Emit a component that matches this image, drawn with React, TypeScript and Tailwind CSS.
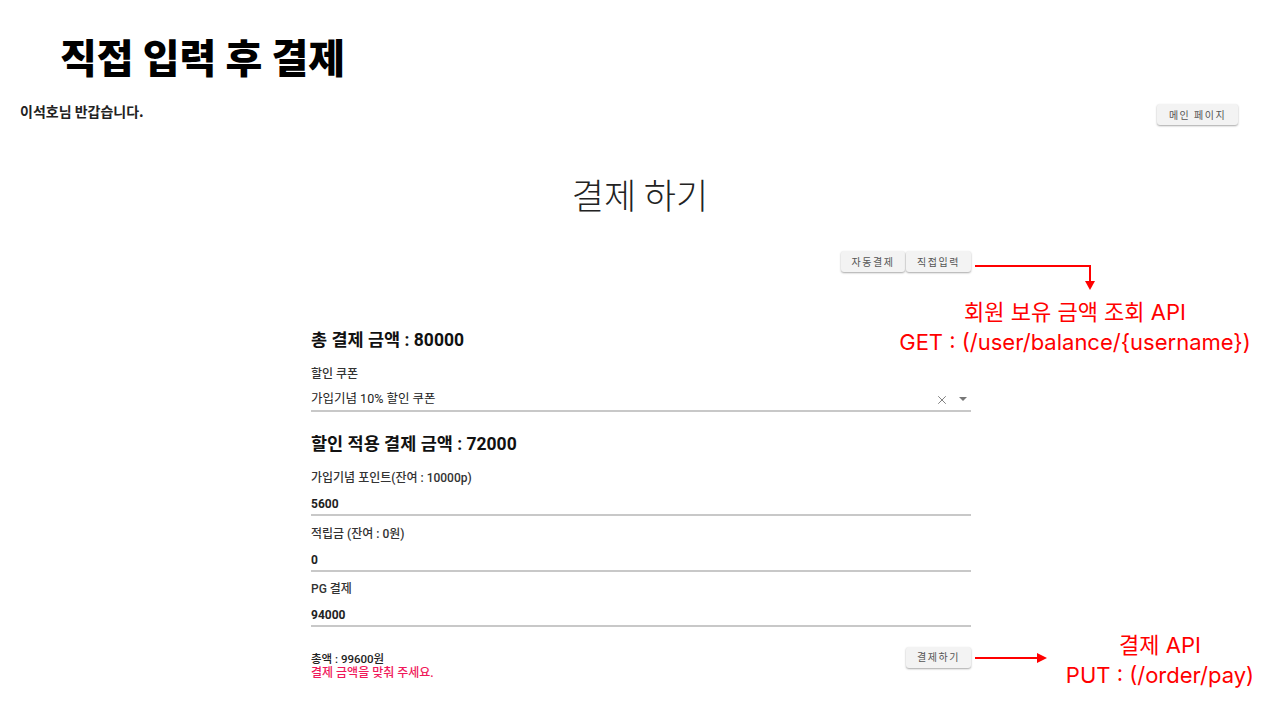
import { X } from "lucide-react";

const cjk = { fontFamily: '"Noto Sans CJK KR", "Noto Sans", sans-serif' };
const form = { fontFamily: 'Roboto, "Noto Sans CJK KR", sans-serif' };
const note = { fontFamily: 'Inter, "Noto Sans CJK KR", sans-serif' };

function MuiButton({ children, className = "" }: { children: React.ReactNode; className?: string }) {
  return (
    <button
      className={
        "bg-[#f3f3f3] text-[#555] text-[10px] tracking-[0.15em] rounded-[3px] shadow-[0_1px_2px_rgba(0,0,0,0.35)] h-[21px] " +
        className
      }
    >
      {children}
    </button>
  );
}

function Field({ label, value }: { label: string; value: string }) {
  return (
    <div className="flex flex-col mb-[7.5px]">
      <div className="text-[12px] font-medium text-[#333] h-[20px] leading-[20px]">{label}</div>
      <div className="text-[12px] font-bold text-[#222] h-[28px] pt-[6px] leading-[20px] border-b-[2px] border-[#c8c8c8]">
        {value}
      </div>
    </div>
  );
}

export default function App() {
  return (
    <div className="relative w-[1280px] h-[720px] bg-white overflow-hidden" style={cjk}>
      {/* slide title */}
      <div className="pl-[60px] pt-[32px] h-[96px] text-[40px] font-black leading-[48px] text-black">
        직접 입력 후 결제
      </div>

      <div className="flex justify-between items-start px-[20px] pr-[42px] -mt-[1px]">
        <div className="text-[14px] font-bold text-[#222] pt-[6px]">이석호님 반갑습니다.</div>
        <MuiButton className="w-[81px] mt-[9px]">메인 페이지</MuiButton>
      </div>

      <div className="text-center text-[35px] font-light text-[#222] mt-[49px] leading-[40px]">결제 하기</div>

      <div className="w-[660px] ml-[311px] mt-[37px]" style={form}>
        <div className="flex justify-end gap-[1px]" style={cjk}>
          <MuiButton className="w-[64px]">자동결제</MuiButton>
          <MuiButton className="w-[65px]">직접입력</MuiButton>
        </div>

        <div className="text-[17.5px] font-bold text-[#111] mt-[57px] leading-[22px]">총 결제 금액 : 80000</div>

        <div className="mt-[13px] flex flex-col">
          <div className="text-[12px] font-medium text-[#333] h-[20px] leading-[20px]">할인 쿠폰</div>
          <div className="flex items-center text-[12.5px] text-[#222] h-[28px] pt-[5px] border-b-[2px] border-[#c8c8c8]">
            <span className="flex-1">가입기념 10% 할인 쿠폰</span>
            <X size={14} strokeWidth={1.4} className="text-[#666] mr-[10px]" />
            <svg width="8" height="5" viewBox="0 0 8 5" className="mr-[4px]">
              <path d="M0 0 L8 0 L4 4 Z" fill="#777" />
            </svg>
          </div>
        </div>

        <div className="text-[17.5px] font-bold text-[#111] mt-[21px] leading-[22px]">할인 적용 결제 금액 : 72000</div>

        <div className="mt-[13px] flex flex-col">
          <Field label="가입기념 포인트(잔여 : 10000p)" value="5600" />
          <Field label="적립금 (잔여 : 0원)" value="0" />
          <Field label="PG 결제" value="94000" />
        </div>

        <div className="flex justify-between items-start mt-[12px]">
          <div className="flex flex-col pt-[5px]">
            <div className="h-[14px] leading-[14px] text-[11.5px] font-medium text-[#222]">총액 : 99600원</div>
            <div className="h-[14px] leading-[14px] text-[12px] font-medium text-[#f0185a]">결제 금액을 맞춰 주세요.</div>
          </div>
          <MuiButton className="w-[65px]">결제하기</MuiButton>
        </div>
      </div>

      {/* annotations */}
      <svg className="absolute left-0 top-0" width="1280" height="720">
        <path d="M975 266 H1090 V282" stroke="#ff0000" strokeWidth="2" fill="none" />
        <path d="M1085 281 L1095 281 L1090 290 Z" fill="#ff0000" />
        <path d="M975 658 H1038" stroke="#ff0000" strokeWidth="2" fill="none" />
        <path d="M1037 653 L1047 658 L1037 663 Z" fill="#ff0000" />
      </svg>
      <div
        className="absolute left-[875px] top-[297px] w-[400px] text-center text-[#ff0000] text-[22px] leading-[30px]"
        style={note}
      >
        <div>회원 보유 금액 조회 API</div>
        <div>GET : (/user/balance/{"{username}"})</div>
      </div>
      <div
        className="absolute left-[1040px] top-[630px] w-[240px] text-center text-[#ff0000] text-[22px] leading-[30px]"
        style={note}
      >
        <div>결제 API</div>
        <div>PUT : (/order/pay)</div>
      </div>
    </div>
  );
}
